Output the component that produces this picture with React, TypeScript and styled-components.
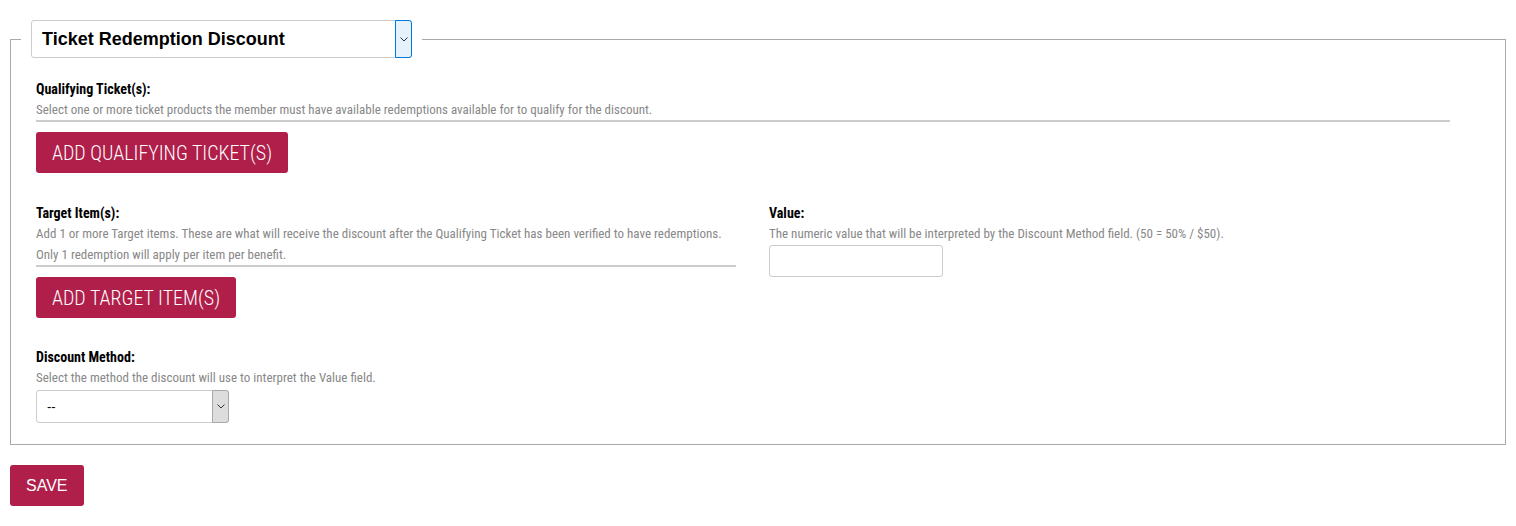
import React from "react";
import styled, { createGlobalStyle } from "styled-components";

const Global = createGlobalStyle`
  html, body { margin: 0; padding: 0; background: #fff; }
  body { font-family: "Liberation Sans", Arial, sans-serif; }
`;

const COND = `"Roboto Condensed", "Liberation Sans Narrow", "DejaVu Sans Condensed", Roboto, sans-serif`;
const BRAND = "#b01e4a";

const Page = styled.div`
  padding: 20px 10px 20px 10px;
  width: 1516px;
  box-sizing: border-box;
`;

const Fieldset = styled.fieldset`
  margin: 0;
  padding: 0 0 21px 10px;
  border: 1px solid #a9a9a9;
  min-width: 0;
`;

const Legend = styled.legend`
  padding: 0 10px;
`;

const SelectBox = styled.div<{ $w: number; $h: number; $top?: number }>`
  display: flex;
  align-items: center;
  width: ${(p) => p.$w}px;
  height: ${(p) => p.$h}px;
  margin-top: ${(p) => p.$top ?? 0}px;
  box-sizing: border-box;
  border: 1px solid #cccccc;
  border-radius: 3px;
  background: #fff;
`;

const SelectText = styled.span<{ $big?: boolean }>`
  flex: 1;
  padding-left: 10px;
  font-family: "Liberation Sans", Arial, sans-serif;
  font-size: ${(p) => (p.$big ? 18 : 13)}px;
  font-weight: ${(p) => (p.$big ? 700 : 400)};
  color: #000;
`;

const ArrowBox = styled.span<{ $focus?: boolean }>`
  display: flex;
  align-items: center;
  justify-content: center;
  align-self: stretch;
  width: 17px;
  margin: -1px -1px -1px 0;
  box-sizing: border-box;
  border: 1px solid ${(p) => (p.$focus ? "#0078d7" : "#a9a9a9")};
  border-radius: 0 3px 3px 0;
  background: ${(p) => (p.$focus ? "#e5f1fb" : "#dddddd")};
`;

const Chevron = () => (
  <svg width="8" height="5" viewBox="0 0 8 5">
    <path d="M0.5 0.5 L4 4 L7.5 0.5" fill="none" stroke="#333" strokeWidth="1" />
  </svg>
);

const Body = styled.div`
  padding: 21px 0 0 15px;
`;

const Section = styled.div<{ $top?: number }>`
  margin-top: ${(p) => p.$top ?? 0}px;
`;

const Label = styled.div`
  font-family: ${COND};
  font-weight: 700;
  font-size: 14px;
  line-height: 20px;
  color: #000;
`;

const Help = styled.div<{ $rule?: number }>`
  font-family: ${COND};
  font-size: 13px;
  line-height: 21px;
  color: #888888;
  ${(p) => (p.$rule ? `width: ${p.$rule}px; border-bottom: 2px solid #cccccc;` : "")}
`;

const ActionButton = styled.button`
  display: block;
  margin-top: 10px;
  height: 41px;
  padding: 0 16px;
  border: none;
  border-radius: 3px;
  background: ${BRAND};
  color: #fff;
  font-family: ${COND};
  font-size: 20px;
  font-weight: 300;
  text-transform: uppercase;
  cursor: pointer;
`;

const Row = styled.div`
  display: grid;
  grid-template-columns: 700px 1fr;
  column-gap: 33px;
  margin-top: 30px;
`;

const TextInput = styled.input`
  display: block;
  margin-top: 1px;
  width: 174px;
  height: 32px;
  box-sizing: border-box;
  border: 1px solid #cccccc;
  border-radius: 3px;
`;

const SaveButton = styled.button`
  margin-top: 20px;
  height: 41px;
  padding: 0 16px;
  border: none;
  border-radius: 3px;
  background: ${BRAND};
  color: #fff;
  font-family: "Liberation Sans", Arial, sans-serif;
  font-size: 16px;
  cursor: pointer;
`;

export default function App() {
  return (
    <Page>
      <Global />
      <Fieldset>
        <Legend>
          <SelectBox $w={381} $h={38}>
            <SelectText $big>Ticket Redemption Discount</SelectText>
            <ArrowBox $focus>
              <Chevron />
            </ArrowBox>
          </SelectBox>
        </Legend>
        <Body>
          <Section>
            <Label>Qualifying Ticket(s):</Label>
            <Help $rule={1414}>
              Select one or more ticket products the member must have available redemptions available for to qualify for the discount.
            </Help>
            <ActionButton>Add Qualifying Ticket(s)</ActionButton>
          </Section>
          <Row>
            <div>
              <Label>Target Item(s):</Label>
              <Help>
                Add 1 or more Target items. These are what will receive the discount after the Qualifying Ticket has been verified to have redemptions.
              </Help>
              <Help $rule={700}>Only 1 redemption will apply per item per benefit.</Help>
              <ActionButton>Add Target Item(s)</ActionButton>
            </div>
            <div>
              <Label>Value:</Label>
              <Help>The numeric value that will be interpreted by the Discount Method field. (50 = 50% / $50).</Help>
              <TextInput />
            </div>
          </Row>
          <Section $top={29}>
            <Label>Discount Method:</Label>
            <Help>Select the method the discount will use to interpret the Value field.</Help>
            <SelectBox $w={193} $h={33} $top={2}>
              <SelectText>--</SelectText>
              <ArrowBox>
                <Chevron />
              </ArrowBox>
            </SelectBox>
          </Section>
        </Body>
      </Fieldset>
      <SaveButton>SAVE</SaveButton>
    </Page>
  );
}
